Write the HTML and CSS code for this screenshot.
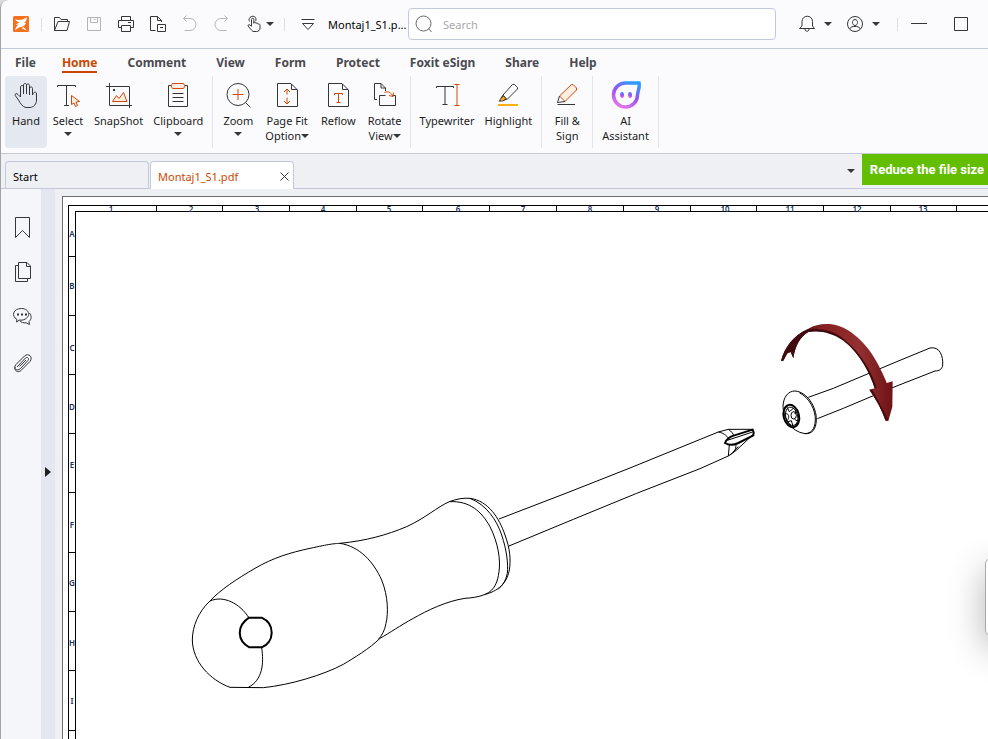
FILE: index.html
```
<!DOCTYPE html>
<html lang="en">
<head>
<meta charset="utf-8">
<title>Montaj1_S1.pdf</title>
<link rel="stylesheet" href="styles.css">
</head>
<body>
<div class="window">
  <header class="titlebar">
    <span class="logo"><svg width="16" height="16" viewBox="0 0 16 16" stroke="none"><rect width="16" height="16" rx="1.5" fill="#f5711c"/><path d="M2 3.500C6 4.500 9 4 14 1.500C13.500 5 12 6.500 10.500 7C12 7 12.500 7 13.200 6.800C12 10 9.500 11 7 11.200C5.500 11.500 4 12.500 2 14.500C2.500 11.500 4 10 5.500 8.500C4.500 8.700 3.500 8.900 2.500 8.600C4 8 5.500 7.200 6.300 6.300C4.500 6 3 5 2 3.500Z" fill="#fff"/><path d="M8.500 12L10.500 11L14 14.500C12 14 10 13 8.500 12Z" fill="#fff"/></svg></span>
    <span class="rule"></span>
    <div class="quick">
      <button class="tool" aria-label="Open"><svg width="18" height="18" viewBox="0 0 18 18"><path d="M1.500 15.500V2.500H6.500L8 4.500H14.500V6.500M1.500 15.500H14L16.500 6.500H5L1.500 15.500"/></svg></button>
      <button class="tool off" aria-label="Save"><svg width="18" height="18" viewBox="0 0 18 18"><path d="M2.500 2.500H15.500V15.500H2.500ZM5.500 2.500V7.500H12.500V2.500M9 4.500H10.500"/></svg></button>
      <button class="tool" aria-label="Print"><svg width="18" height="18" viewBox="0 0 18 18"><path d="M4.500 5.500V1.500H13.500V5.500M4.500 12.500H1.500V5.500H16.500V12.500H13.500M4.500 10.500H13.500V16.500H4.500ZM11 7.500H14"/></svg></button>
      <button class="tool" aria-label="Page output"><svg width="18" height="18" viewBox="0 0 18 18"><path d="M6.500 15.500H1.500V1.500H8.500L12.500 5.500V7M8.500 1.500V5.500H12.500M8.500 9.500H16.500V16.500H8.500ZM11 12.500H14"/></svg></button>
      <button class="tool off" aria-label="Undo"><svg width="18" height="18" viewBox="0 0 18 18"><path d="M5.500 .5L2.500 3.500L5.500 6.500M2.500 3.500H9A6 6 0 0 1 9 15.500H3.500"/></svg></button>
      <button class="tool off" aria-label="Redo"><svg width="18" height="18" viewBox="0 0 18 18"><path d="M11.500 .5L14.500 3.500L11.500 6.500M14.500 3.500H8A6 6 0 0 0 8 15.500H13.500"/></svg></button>
      <button class="pair pointer" aria-label="Touch mode"><svg width="16" height="18" viewBox="0 0 16 18"><path d="M5.500 11V4.500C5.500 2.800 7.800 2.800 7.800 4.500V8.500M7.800 8C8 7 9.800 7 10 8.500M10 8.500C10.500 7.500 12 8 12 9.200C13 8.600 14 9 14 10.500V13C14 15.200 12.500 16.500 10.500 16.500H8C6.500 16.500 5.800 15.700 5 14.500L2 11C1.800 9.600 3.300 9.300 4 10L5.500 11.500M3.500 6.500C1.200 1.500 9 -1 10 3.800C10 5 9.800 5.800 9.500 6.200"/></svg><i class="caret"></i></button>
    </div>
    <span class="rule"></span>
    <button class="collapse" aria-label="Customize"><svg width="16" height="16" viewBox="0 0 16 16"><path d="M1.500 3.500H14.500M2.500 7.500H13.500L8 13.500Z"/></svg></button>
    <span class="doctitle">Montaj1_S1.p...</span>
    <label class="search"><svg width="18" height="18" viewBox="0 0 18 18"><circle cx="8.500" cy="8.500" r="7.500"/><path d="M13.500 13.500L16.500 17"/></svg><input type="text" placeholder="Search" aria-label="Search"></label>
    <div class="sys">
      <button class="pair" aria-label="Notifications"><svg width="18" height="18" viewBox="0 0 18 18"><path d="M1.500 13.500H16.500L14.500 11V6.500C14.500 -.5 4 -.5 4 6.500V11ZM7 14C7 17 11 17 11 14"/></svg><i class="caret"></i></button>
      <button class="pair" aria-label="Account"><svg width="18" height="18" viewBox="0 0 18 18"><circle cx="9" cy="9" r="7.500"/><path d="M9 4.500C5.500 4.500 5.800 10.500 9 10.500S12.500 4.500 9 4.500M3.800 14C4.500 11.500 7 11.500 9 11.500S13.500 11.500 14.200 14"/></svg><i class="caret"></i></button>
    </div>
    <span class="rule"></span>
    <div class="wincontrols">
      <button class="tool" aria-label="Minimize"><svg width="16" height="16" viewBox="0 0 16 16"><path d="M0 7.500H16"/></svg></button>
      <button class="tool" aria-label="Maximize"><svg width="16" height="16" viewBox="0 0 16 16"><path d="M1.500 1.500H14.500V14.500H1.500Z"/></svg></button>
    </div>
  </header>

  <nav class="menu">
    <a href="#">File</a><a href="#" class="current">Home</a><a href="#">Comment</a><a href="#">View</a><a href="#">Form</a><a href="#">Protect</a><a href="#">Foxit eSign</a><a href="#">Share</a><a href="#">Help</a>
  </nav>

  <div class="ribbon">
    <div class="group">
      <button class="cmd pressed"><svg width="28" height="28" viewBox="0 0 28 28"><path d="M6.500 19L3.200 14.500C2.500 12.500 5 12 6 13.500L8.500 16V6C8.500 4 11.500 4 11.500 6V13V4C11.500 2 14.500 2 14.500 4V13V4.500C14.500 2.500 17.500 2.500 17.500 4.500V14V7.500C18 5.500 20.500 5.500 20.500 7.500V14C21 11 24.500 10 24.500 13V19C24.500 23 22 26 18 26.500H14C10.500 26 8.500 22.500 6.500 19Z"/></svg><span>Hand</span></button>
      <button class="cmd"><svg width="28" height="28" viewBox="0 0 28 28"><path d="M3.500 6V4.500H21.500V6M12.500 4.500V24.500M10 24.500H15"/><path class="accent tint" d="M17.500 14.500V23.500L20 22L21.500 25.500L23.500 24.500L22 21L25.500 20.500Z"/></svg><span>Select</span><i class="caret"></i></button>
      <button class="cmd"><svg width="28" height="28" viewBox="0 0 28 28"><path d="M4.500 2V24.500H27M1 5.500H24.500V27"/><path class="fill" d="M8 8H10V10H8Z"/><path class="accent tint" d="M7.500 20.500L11.500 14.500L14 17.500L18.500 11.500L22 20.500Z"/></svg><span>SnapShot</span></button>
      <button class="cmd"><svg width="28" height="28" viewBox="0 0 28 28"><path d="M7 4.500H4.500V25.500H23.500V4.500H21M8.500 12.500H19.500M8.500 16.500H19.500M8.500 20.500H19.500"/><path class="accent tint" d="M8.500 2.500H19.500L21 5L19.500 7.500H8.500L7 5Z"/></svg><span>Clipboard</span><i class="caret"></i></button>
    </div>
    <div class="group roomy">
      <button class="cmd"><svg width="28" height="28" viewBox="0 0 28 28"><circle cx="14" cy="13.500" r="11"/><path d="M22 22L26.500 26.500"/><path class="accent" d="M8.500 13.500H19.500M14 8V19"/></svg><span>Zoom</span><i class="caret"></i></button>
      <button class="cmd"><svg width="28" height="28" viewBox="0 0 28 28"><path d="M4.500 2.500H18L24.500 9V25.500H4.500ZM18.500 3V8.500H24"/><path class="accent" d="M14 8.500V13.500M11 11L14 8L17 11M14 16.500V23M11 20L14 23L17 20"/></svg><span>Page Fit<br>Option<i class="caret"></i></span></button>
      <button class="cmd"><svg width="28" height="28" viewBox="0 0 28 28"><path d="M4.500 2.500H18L24.500 9V25.500H4.500ZM18.500 3V8.500H24"/><path class="accent" d="M10.500 14V12.500H18.500V14M14.500 12.500V21.500M12.500 21.500H16.500"/></svg><span>Reflow</span></button>
      <button class="cmd"><svg width="28" height="28" viewBox="0 0 28 28"><path d="M6 18.500H3.500V2.500H10L14.500 7V10M10 2.500V7H14.500M14.500 14.500H8.500V24.500H24.500V14.500H22"/><path class="accent" d="M13.500 11.500C17 10 20 11 22 15.500M18 14.500L22 15.500L22.500 11.500"/></svg><span>Rotate<br>View<i class="caret"></i></span></button>
    </div>
    <div class="group">
      <button class="cmd"><svg width="28" height="28" viewBox="0 0 28 28"><path d="M3.500 7V5.500H20.500V7M12 5.500V23.500M9.500 23.500H14.500"/><path class="accent" d="M21.500 3.500H26.500M24 3.500V24.500M21.500 24.500H26.500"/></svg><span>Typewriter</span></button>
      <button class="cmd"><svg width="28" height="28" viewBox="0 0 28 28"><path d="M9 14L18.500 3.500H20.500L23.500 6.500V8L13 18.500Z"/><path class="fill" d="M4.500 20.500L8.500 14L13 18.500L8.500 20.500Z"/><path class="amber" d="M6 19L9.500 15.500L11.500 17.500L8 20Z"/><path class="amber" d="M4 23H24V25H4Z"/></svg><span>Highlight</span></button>
    </div>
    <div class="group">
      <button class="cmd"><svg width="28" height="28" viewBox="0 0 28 28"><path class="accent tint" d="M6.500 15L18.500 3.500H20L23.500 7V9L12 20.500Z"/><path d="M6.500 15L4.500 21.500L12 20.500M4.500 23.500H22"/></svg><span>Fill &amp;<br>Sign</span></button>
    </div>
    <div class="group">
      <button class="cmd"><svg width="30" height="28" viewBox="0 0 30 28"><defs><linearGradient id="ai" x1=".8" y1="0" x2=".3" y2="1"><stop offset="0" stop-color="#2c9cff"/><stop offset=".5" stop-color="#9b50f5"/><stop offset="1" stop-color="#e274e6"/></linearGradient></defs><path d="M28 2H14.500A12 12 0 1 0 26.500 14C27 9 29 7 28 2Z" style="stroke:url(#ai);stroke-width:3.500"/><ellipse cx="11" cy="14" rx="2" ry="3" fill="url(#ai)" stroke="none"/><ellipse cx="19" cy="14" rx="2" ry="3" fill="url(#ai)" stroke="none"/></svg><span>AI<br>Assistant</span></button>
    </div>
  </div>

  <div class="tabs">
    <a href="#" class="tab">Start</a>
    <div class="tab open"><a href="#">Montaj1_S1.pdf</a><button aria-label="Close tab"><svg width="9" height="9" viewBox="0 0 9 9"><path d="M.5 .5L8.500 8.500M8.500 .5L.5 8.500"/></svg></button></div>
    <button class="tablist" aria-label="Tab list"><i class="caret"></i></button>
    <button class="promo">Reduce the file size</button>
  </div>

  <main class="work">
    <aside class="side">
      <button aria-label="Bookmarks"><svg width="20" height="24" viewBox="0 0 20 24"><path d="M3.500 1.500H17.500V21.500L10.500 14.500L3.500 21.500Z"/></svg></button>
      <button aria-label="Pages"><svg width="20" height="24" viewBox="0 0 20 24"><path d="M6.500 1.500H15L18.500 5V17.500H6.500ZM14.500 1.500V5.500H18.500M6 4.500H3.500V20.500H15.500V18"/></svg></button>
      <button aria-label="Comments"><svg width="20" height="24" viewBox="0 0 20 24"><path d="M5 13.500C-1 10 1 2.500 9.500 2.500S20 12 10 14.200L7.500 14L4.500 16ZM17.500 7C20 10 19.500 13.500 17 15.500L17.500 18.500L14 16.800C11.500 17 9 16.500 7.500 14.500"/><path d="M5 8.500H7M9 8.500H11M13 8.500H15" stroke-width="2"/></svg></button>
      <button aria-label="Attachments"><svg width="20" height="24" viewBox="0 0 20 24"><path d="M5 16L13.500 7C15.500 5.500 17.500 7.500 16 9.500L8.500 17.500C5 21 .5 17.500 4 13.500L12.500 5C16.500 1.500 21.500 6 18 10.500L9 19.500C5.500 22.500 1.500 19 3.500 16M7.500 15.500L14 9"/></svg></button>
    </aside>
    <button class="expander" aria-label="Expand panel"></button>
    <div class="paper">
      <svg class="sheet" viewBox="63 197 925 542" preserveAspectRatio="xMinYMin slice">
        <defs>
          <linearGradient id="blood" x1="0" y1="0" x2="1" y2="0"><stop offset="0" stop-color="#5c1014"/><stop offset=".4" stop-color="#872022"/><stop offset=".7" stop-color="#933030"/><stop offset="1" stop-color="#701317"/></linearGradient>
        </defs>
        <g class="frame">
          <path d="M988 205.500H68.500V739M988 211.500H75.500V739"/>
          <path d="M156 205V212M222.500 205V212M289.500 205V212M356 205V212M422.500 205V212M489.500 205V212M556.500 205V212M623 205V212M690 205V212M756.500 205V212M823.500 205V212M890 205V212M956.500 205V212M68 256H76M68 315.500H76M68 374.500H76M68 433.500H76M68 492.500H76M68 552H76M68 611.500H76M68 670.500H76M68 730H76"/>
        </g>
        <g class="marks">
          <text x="111" y="212">1</text><text x="191" y="212">2</text><text x="257" y="212">3</text><text x="323" y="212">4</text><text x="389" y="212">5</text><text x="458" y="212">6</text><text x="523" y="212">7</text><text x="590" y="212">8</text><text x="657" y="212">9</text><text x="725" y="212">10</text><text x="790" y="212">11</text><text x="857" y="212">12</text><text x="923" y="212">13</text>
          <text x="72" y="237">A</text><text x="72" y="289">B</text><text x="72" y="351">C</text><text x="72" y="410">D</text><text x="72" y="468">E</text><text x="72" y="528">F</text><text x="72" y="586">G</text><text x="72" y="646">H</text><text x="72" y="704">I</text>
        </g>
        <g class="ink" transform="translate(180 480) scale(.33333)">
          <path d="M90 363C120 330 170 297 225 265S330 218 390 205S460 191 480 190C560 182 620 165 680 140C740 112 770 82 808 65C830 57 850 53 870 55C925 62 958 115 975 165C990 205 993 240 988 270C982 300 965 330 916 343C895 352 870 354 855 355C800 363 740 392 700 415C660 437 630 458 600 475C570 505 520 535 490 553C430 585 330 615 250 623L150 622C90 600 38 545 37 480C37 440 55 395 90 363"/>
          <path d="M808 65C870 62 905 95 930 140C955 190 962 240 957 275C953 305 945 330 916 343M870 55C920 75 950 120 965 165C980 210 985 250 982 280C978 300 970 315 955 327"/>
          <path d="M480 190C540 200 580 245 605 300C625 350 625 400 618 430C615 450 605 468 595 478M90 363C130 345 180 370 207 414M245 503C252 550 248 600 205 622"/>
          <path class="bold" d="M207 413H245C287 432 283 488 245 502H208C168 480 172 436 207 413Z"/>
        </g>
        <g class="ink" transform="translate(700 310) scale(.33333)">
          <path d="M-603 627L-390 545L-210 474L55 366L85 358L158 358M-573 708L-380 628L-190 550L0 476L85 438L110 420L160 373M55 366C75 370 83 380 88 390M85 358C95 364 100 372 101 377M88 405L85 438M108 402C108 412 107 420 100 428M90 436L115 410"/>
          <path class="bold" d="M158 359L101 377C85 382 78 390 75 399C85 405 100 406 115 399L160 376L161 367Z"/><path d="M82 391L158 366"/>
          <path d="M325 262L400 235L545 174L600 151L690 114C720 108 730 140 728 165C726 178 718 183 705 183L575 234L430 295L352 326"/>
          <path d="M285 243C265 243 250 260 249 290C250 320 270 365 315 371C335 372 348 360 349 330C350 290 320 245 285 243Z"/>
          <path d="M298 248C328 263 347 300 346 330C345 358 333 370 315 371"/>
          <ellipse class="bold" cx="274" cy="318" rx="23" ry="34" transform="rotate(-14 274 318)"/>
          <ellipse cx="275" cy="319" rx="18" ry="28" transform="rotate(-14 275 319)"/>
          <path d="M260 290L268 305L280 295M288 300L285 312M254 313C266 305 272 326 258 334M262 336L274 332L279 348M292 333L284 328"/>
          <ellipse cx="281" cy="316" rx="8" ry="11"/>
        </g>
        <g transform="translate(700 310) scale(.33333)">
          <path fill="url(#blood)" d="M243 153C252 115 280 75 325 56C345 44 370 40 395 43C460 52 515 120 540 175C550 195 556 208 560 219L578 214L577 290L565 333L557 332C545 300 530 270 508 239L524 235C510 190 480 130 430 90C400 68 360 58 325 66C300 80 285 110 280 145L272 126L262 130L250 152Z"/>
          <path fill="#400b0e" d="M325 57C350 55 400 60 430 86C485 130 515 185 530 233L524 235C510 190 480 130 430 92C400 70 360 60 325 66C300 80 285 110 280 145L272 126L262 130L250 152L243 153C252 115 280 75 325 57ZM508 239L517 239L565 330L557 332C545 300 530 270 508 239Z"/>
        </g>
      </svg>
    </div>
    <div class="floating"></div>
  </main>
</div>
</body>
</html>
```

FILE: styles.css
```
* { box-sizing: border-box; }
html, body { height: 100%; }
body {
  margin: 0;
  overflow: hidden;
  background: #dcdcdc;
  color: #1b1b1b;
  font: 11px/15px "Noto Sans", "Open Sans", sans-serif;
}
button {
  display: flex;
  align-items: center;
  justify-content: center;
  margin: 0;
  padding: 0;
  border: 0;
  background: none;
  color: inherit;
  font: inherit;
}
a { color: inherit; text-decoration: none; }
svg { display: block; flex: none; fill: none; stroke: #35363a; stroke-width: 1; }
.logo svg { stroke: none; }
.caret {
  display: inline-block;
  flex: none;
  border: 4px solid transparent;
  border-top: 4px solid #35363a;
  border-bottom: 0;
}
.window {
  display: flex;
  flex-direction: column;
  height: 100%;
  overflow: hidden;
  border-left: 1px solid #a3a3a3;
  border-top-left-radius: 8px;
  background: #fbfbfe;
}

/* Title bar */
.titlebar {
  display: flex;
  align-items: center;
  height: 49px;
  flex: none;
  border-bottom: 1px solid #c3c9da;
}
.logo { display: flex; justify-content: center; width: 40px; }
.rule { width: 1px; height: 13px; flex: none; background: #dcdfe8; }
.quick { display: flex; padding-left: 4px; }
.tool { width: 32px; height: 32px; }
.off svg { stroke: #b4b5ba; }
.pair { gap: 8px; }
.pointer { gap: 4px; padding: 0 10px 0 8px; }
.collapse { width: 43px; padding-left: 3px; }
.doctitle { width: 80px; flex: none; color: #000; white-space: nowrap; }
.search {
  display: flex;
  align-items: center;
  gap: 10px;
  flex: 1;
  height: 32px;
  padding-left: 6px;
  border: 1px solid #c3c9da;
  border-radius: 4px;
  background: #fff;
}
.search svg { stroke: #66676b; }
.search input {
  flex: 1;
  min-width: 0;
  padding: 0;
  border: 0;
  outline: 0;
  background: none;
  font: inherit;
}
.search input::placeholder { color: #a9a9ad; opacity: 1; }
.sys { display: flex; gap: 14px; padding: 0 17px 0 22px; }
.wincontrols { display: flex; gap: 10px; padding: 0 11px 0 5px; }

/* Menu */
.menu {
  display: flex;
  gap: 30px;
  flex: none;
  padding: 5px 14px 0;
  color: #4a4a4e;
  font-size: 12px;
  font-weight: 700;
  line-height: 18px;
}
.menu a { height: 22px; }
.menu a:first-child { margin-right: -4px; }
.menu .current { height: 18px; line-height: 17px; color: #cb4700; box-shadow: 0 1px 0 #cb4700; border-bottom: 1px solid #cb4700; }

/* Ribbon */
.ribbon {
  display: flex;
  flex: none;
  height: 78px;
  padding-left: 4px;
  border-bottom: 1px solid #c3c9da;
}
.group {
  display: flex;
  height: 72px;
  padding: 0 4px;
  border-right: 1px solid #e2e5ee;
}
.group:first-child { padding-left: 0; }
.cmd {
  flex-direction: column;
  justify-content: flex-start;
  min-width: 42px;
  padding: 5px 5px 0;
  border-radius: 4px;
  line-height: 15px;
}
.roomy { padding-right: 2px; }
.roomy .cmd { padding: 5px 6px 0; }
.cmd > span { margin-top: 4px; white-space: nowrap; }
.cmd > .caret { margin-top: 4px; }
.cmd span .caret { vertical-align: 2px; }
.pressed { background: #e4e8f0; }
.cmd .accent { stroke: #cf4a08; }
.cmd .tint { fill: #fdeee0; }
.cmd .fill { fill: #35363a; stroke: none; }
.cmd .amber { fill: #fbb014; stroke: none; }

/* Document tabs */
.tabs {
  display: flex;
  flex: none;
  align-items: flex-end;
  gap: 1px;
  height: 35px;
  padding-left: 4px;
  border-bottom: 1px solid #c3c9da;
  background: #eff0f4;
}
.tab {
  display: flex;
  align-items: center;
  justify-content: space-between;
  width: 144px;
  height: 27px;
  padding: 2px 4px 0 7px;
  border: 1px solid #c3c9da;
  border-bottom: 0;
  border-radius: 4px 4px 0 0;
  color: #000;
}
.open { height: 28px; margin-bottom: -1px; background: #fff; color: #cb4700; }
.tablist { align-self: center; width: 20px; margin-left: auto; }
.promo {
  align-self: flex-start;
  height: 31px;
  padding: 0 4px 0 8px;
  background: #63bd00;
  color: #fff;
  font: 700 13px/20px Roboto, sans-serif;
  white-space: nowrap;
}

/* Workspace */
.work { position: relative; display: flex; flex: 1; min-height: 0; background: #eff0f4; }
.side {
  display: flex;
  flex-direction: column;
  align-items: center;
  gap: 21px;
  width: 40px;
  padding: 27px 0 0 2px;
  background: #f5f6fa;
}
.expander { width: 14px; background: #e4e7f1; }
.expander::before {
  content: "";
  margin-top: 16px;
  border: 5px solid transparent;
  border-left: 6px solid #1f1f1f;
  border-right: 0;
}
.paper {
  flex: 1;
  min-width: 0;
  margin: 7px 0 0 7px;
  border: 1px solid #6d6f70;
  border-width: 1px 0 0 1px;
  background: #fff;
}
.sheet { width: 100%; height: 100%; }
.frame { stroke: #000; shape-rendering: crispEdges; }
.marks { fill: #14305c; stroke: none; font-size: 8px; font-weight: 600; text-anchor: middle; }
.ink path, .ink ellipse { stroke: #000; vector-effect: non-scaling-stroke; }
.ink .bold { stroke-width: 2; }
.sheet g:last-child path { stroke: none; }
.floating {
  position: absolute;
  right: -39px;
  bottom: 103px;
  width: 42px;
  height: 78px;
  border: 1px solid #a8a8a8;
  border-radius: 6px;
  background: #fff;
  box-shadow: 0 12px 36px rgba(0, 0, 0, .3);
}
```
